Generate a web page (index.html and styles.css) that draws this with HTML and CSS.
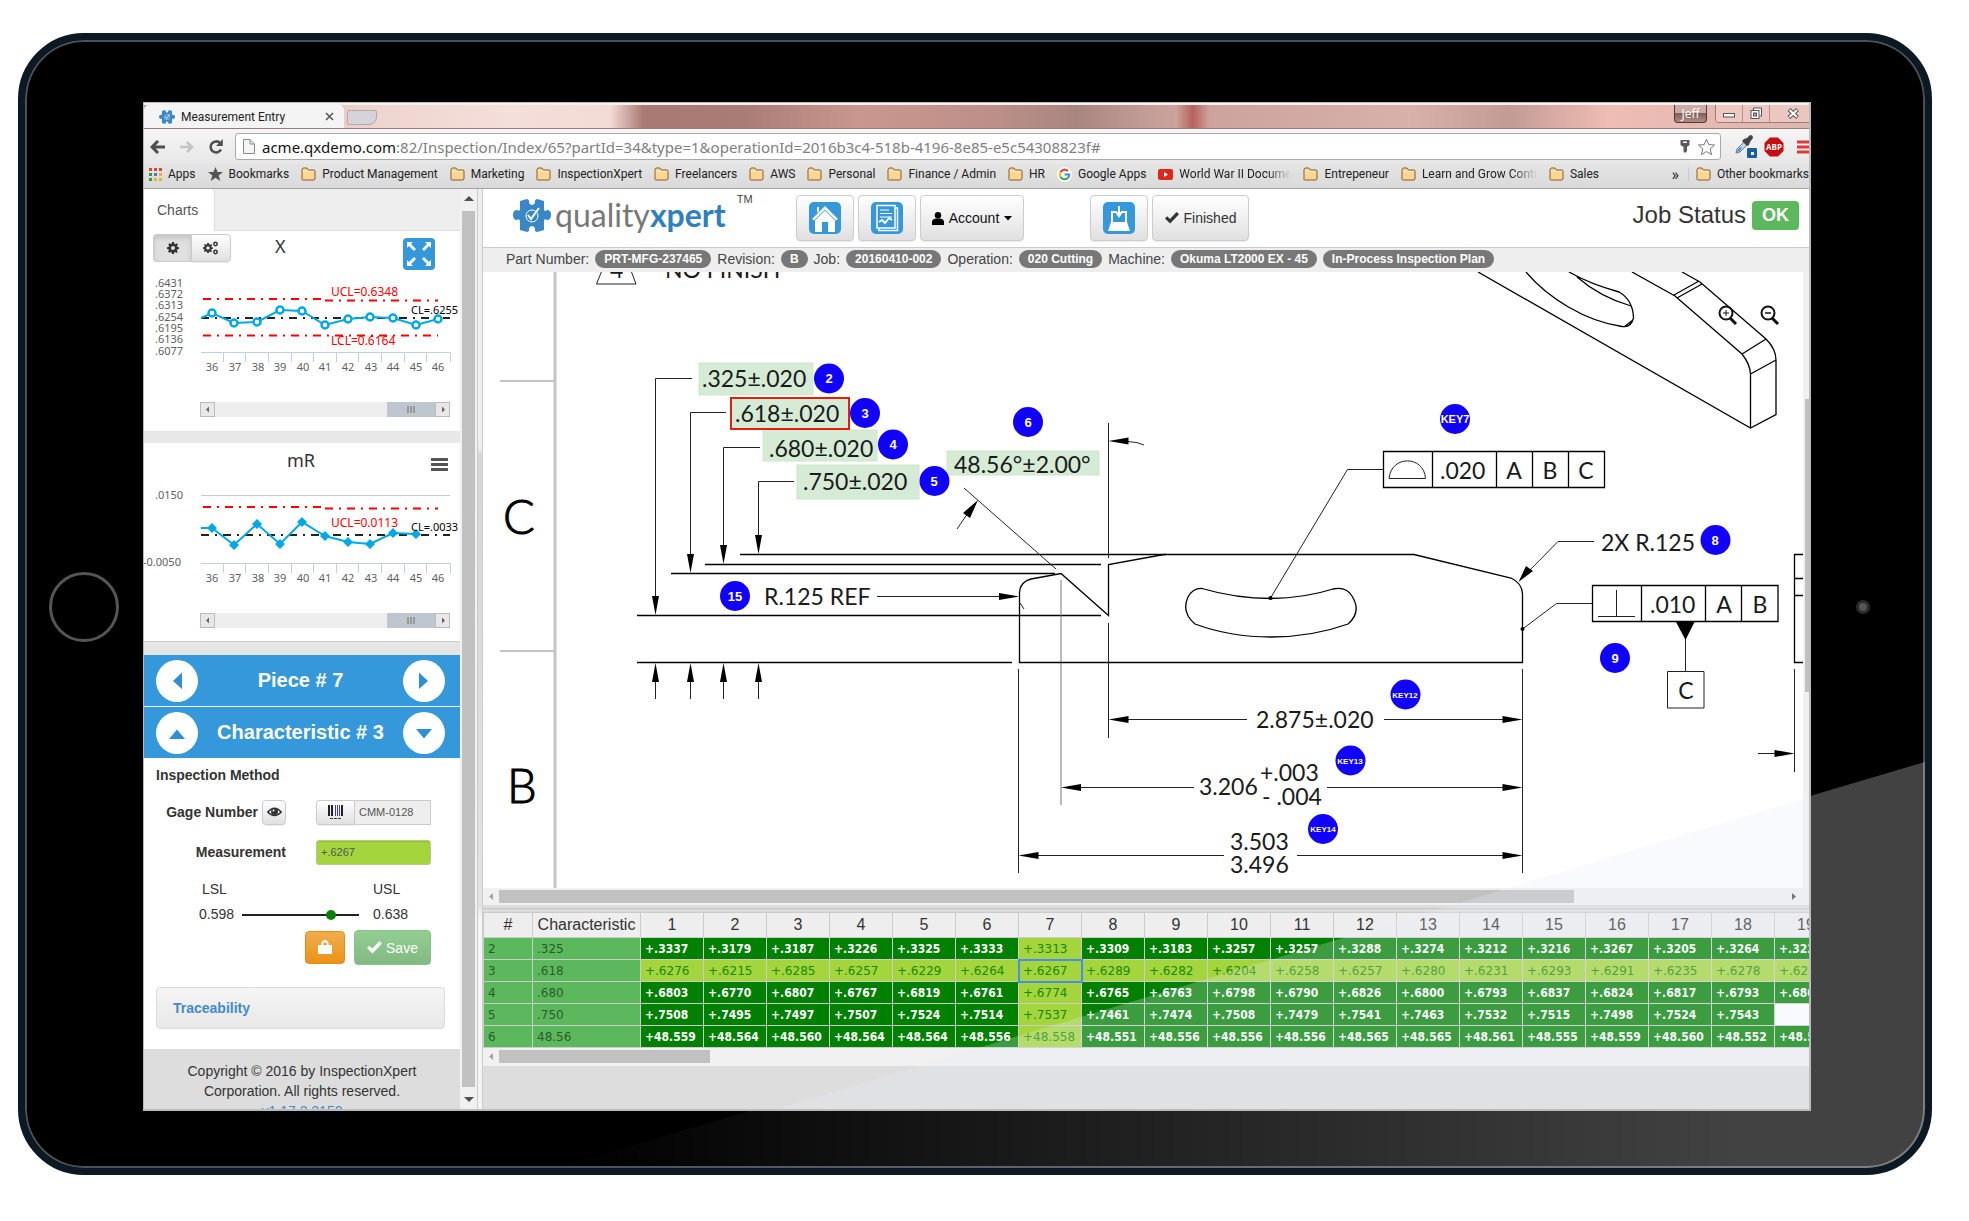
FILE: index.html
```html
<!DOCTYPE html>
<html lang="en">
<head>
<meta charset="utf-8">
<title>Measurement Entry</title>
<link rel="stylesheet" href="styles.css">
</head>
<body>
<svg width="0" height="0" class="defs" aria-hidden="true">
  <defs>
    <symbol id="puzzle" viewBox="0 0 38 33">
      <path fill="#3a87c8" d="M7 2 L14 0 Q17 1 16 4 Q19 8 22 4 Q21 1 24 0 L31 2 L31 11 Q32 13 34 11 Q38 11 38 16 Q38 21 34 21 Q31 19 31 22 L31 31 L24 33 Q21 32 22 29 Q19 25 16 29 Q17 32 14 33 L7 31 L7 22 Q6 19 4 21 Q0 21 0 16 Q0 11 4 11 Q7 13 7 10 Z"/>
      <circle cx="19" cy="17" r="6" fill="none" stroke="#fff" stroke-width="1"/>
      <path d="M15 16 L18 20 L26 9" fill="none" stroke="#fff" stroke-width="2"/>
    </symbol>
    <symbol id="folder" viewBox="0 0 15 14">
      <path d="M1 12.500V2.500L2 1H6L7.500 3H13.500L14 4V12L13 13H1.500Z" fill="#fdd692" stroke="#8d5a2c"/>
      <path d="M2 4.500H13" stroke="#fff0cf"/>
    </symbol>
    <symbol id="cog" viewBox="0 0 12 12">
      <path fill-rule="evenodd" fill="#333" d="M5 0H7L7.400 1.700L8.600 2.200L10 1.300L11 2.500L10 3.800L10.400 5L12 5.300V7L10.400 7.300L9.900 8.500L10.700 10L9.500 11L8.200 10.100L7.300 10.500L7 12H5L4.600 10.400L3.500 10L2.100 10.800L1 9.600L1.900 8.200L1.500 7.200L0 6.900V5.200L1.600 4.900L2.100 3.700L1.200 2.300L2.400 1.200L3.800 2L4.700 1.700ZM6 4A2 2 0 1 0 6 8A2 2 0 1 0 6 4Z"/>
    </symbol>
    <symbol id="check" viewBox="0 0 14 12"><path d="M0 6.500L2.200 4.300L5 7L11.600 0L14 2.300L5.100 11.600Z" fill="currentColor"/></symbol>
  </defs>
</svg>

<div class="tablet">
  <div class="bezel bezel-left"><button class="home" aria-label="Home button"></button></div>

  <div class="screen">
    <div class="tabstrip">
      <div class="tab">
        <svg width="16" height="14"><use href="#puzzle"/></svg>
        <span class="tab-title">Measurement Entry</span>
        <button class="plain" aria-label="Close tab"><svg width="9" height="9"><path d="M1 1L8 8M8 1L1 8" stroke="#555" stroke-width="1.500"/></svg></button>
      </div>
      <button class="plain newtab" aria-label="New tab"></button>
      <div class="winctl">
        <button class="user">Jeff</button>
        <div class="winbtns">
          <button aria-label="Minimize"><svg width="13" height="13"><rect x=".5" y="6.500" width="11" height="3.500" fill="#fff" stroke="#555"/></svg></button>
          <button aria-label="Restore"><svg width="13" height="13"><path d="M3.500 3V1H11.500V9H9.500" fill="#fff" stroke="#555"/><rect x="1" y="3.500" width="8" height="8" fill="#fff" stroke="#555"/><rect x="3.500" y="6" width="3" height="3" fill="#c99" stroke="#555"/></svg></button>
          <button aria-label="Close"><svg width="13" height="11"><path d="M2 1.500L10.500 9.500M10.500 1.500L2 9.500" stroke="#555" stroke-width="4"/><path d="M2.500 2L10 9M10 2L2.500 9" stroke="#fff" stroke-width="2"/></svg></button>
        </div>
      </div>
    </div>

    <div class="toolbar">
      <button class="plain" aria-label="Back"><svg width="16" height="14"><path d="M8 1L2 7L8 13M2 7H15" fill="none" stroke="#4f4f4f" stroke-width="3"/></svg></button>
      <button class="plain" aria-label="Forward"><svg width="16" height="14"><path d="M8 2L13 7L8 12M13 7H1" fill="none" stroke="#c4c4c4" stroke-width="2.500"/></svg></button>
      <button class="plain" aria-label="Reload"><svg width="16" height="16"><path d="M13 10.500A5.500 5.500 0 1 1 12 4" fill="none" stroke="#4f4f4f" stroke-width="2.600"/><path d="M14.800 0V7H8Z" fill="#4f4f4f"/></svg></button>
      <div class="urlbox">
        <svg width="12" height="15"><path d="M.5 .5H7L11.500 5V14.500H.5Z" fill="#f5f5f5" stroke="#888"/><path d="M7 .5V5H11.500" fill="none" stroke="#888"/></svg>
        <span class="url"><b>acme.qxdemo.com</b>:82/Inspection/Index/65?partId=34&amp;type=1&amp;operationId=2016b3c4-518b-4196-8e85-e5c54308823f#</span>
        <svg width="10" height="15"><path d="M.5 1H9.500V6L7.500 7.500H7V12L5 14L3.500 12.500V7.500H2.500L.5 6Z" fill="#5a5a5a"/><rect x="3" y="2.500" width="4" height="1.500" fill="#fff"/></svg>
        <svg width="19" height="18" class="star"><path d="M9.500 1.200L11.800 6.600L17.600 7L13.200 10.800L14.600 16.600L9.500 13.500L4.400 16.600L5.800 10.800L1.400 7L7.200 6.600Z" fill="#fff" stroke="#777"/></svg>
      </div>
      <svg width="24" height="25"><path d="M2 19L3 15L10 8L13 11L6 18Z" fill="#bcd7ec" stroke="#777"/><path d="M3 18L5 14L8 13L6 17Z" fill="#3d8fd1"/><path d="M10 5L13 4L16 1Q19 1 19 4L16 8L15 11L13 12L8 7Z" fill="#444"/><rect x="13" y="14" width="10" height="10" rx="1" fill="#1d5f97"/><rect x="17" y="18" width="3" height="3" fill="#e8f0f7"/></svg>
      <svg width="20" height="20" class="abp"><path d="M6 .5H14L19.500 6V14L14 19.500H6L.5 14V6Z" fill="#c70d0d"/><text x="10" y="13" text-anchor="middle">ABP</text></svg>
      <svg width="12" height="14"><path d="M0 2H12M0 7H12M0 12H12" stroke="#db3a3a" stroke-width="3"/></svg>
    </div>

    <nav class="bookmarks" aria-label="Bookmarks">
      <a href="#"><svg width="13" height="13"><path d="M0 0H3V3H0ZM5 0H8V3H5ZM10 0H13V3H10Z" fill="#e0442f"/><path d="M0 5H3V8H0Z" fill="#2f9a48"/><path d="M5 5H8V8H5Z" fill="#3a7de0"/><path d="M10 5H13V8H10Z" fill="#f0b32b"/><path d="M0 10H3V13H0Z" fill="#2f9a48"/><path d="M5 10H8V13H5ZM10 10H13V13H10Z" fill="#f0b32b"/></svg>Apps</a>
      <a href="#"><svg width="15" height="14"><path d="M7.500 0L9.600 5H15L10.700 8.400L12.300 14L7.500 10.700L2.700 14L4.300 8.400L0 5H5.400Z" fill="#555"/></svg>Bookmarks</a>
      <a href="#"><svg width="15" height="14"><use href="#folder"/></svg>Product Management</a>
      <a href="#"><svg width="15" height="14"><use href="#folder"/></svg>Marketing</a>
      <a href="#"><svg width="15" height="14"><use href="#folder"/></svg>InspectionXpert</a>
      <a href="#"><svg width="15" height="14"><use href="#folder"/></svg>Freelancers</a>
      <a href="#"><svg width="15" height="14"><use href="#folder"/></svg>AWS</a>
      <a href="#"><svg width="15" height="14"><use href="#folder"/></svg>Personal</a>
      <a href="#"><svg width="15" height="14"><use href="#folder"/></svg>Finance / Admin</a>
      <a href="#"><svg width="15" height="14"><use href="#folder"/></svg>HR</a>
      <a href="#"><svg width="15" height="15"><circle cx="7.500" cy="7.500" r="7.500" fill="#fff"/><path d="M3.400 5.200A4.800 4.800 0 0 1 11 4" stroke="#ea4335" fill="none" stroke-width="2"/><path d="M3.400 5.200A5 5 0 0 0 3.400 9.800" stroke="#fbbc05" fill="none" stroke-width="2"/><path d="M3.400 9.800A4.800 4.800 0 0 0 10.800 11" stroke="#34a853" fill="none" stroke-width="2"/><path d="M10.800 11A4.800 4.800 0 0 0 12.300 7.500H7.500" stroke="#4285f4" fill="none" stroke-width="2"/></svg>Google Apps</a>
      <a href="#" class="faded"><svg width="15" height="11"><rect width="15" height="11" rx="2" fill="#e1251b"/><path d="M6 3L10 5.500L6 8Z" fill="#fff"/></svg>World War II Docume</a>
      <a href="#"><svg width="15" height="14"><use href="#folder"/></svg>Entrepeneur</a>
      <a href="#" class="faded"><svg width="15" height="14"><use href="#folder"/></svg>Learn and Grow Conti</a>
      <a href="#"><svg width="15" height="14"><use href="#folder"/></svg>Sales</a>
      <span class="more">»</span>
      <a href="#" class="other"><svg width="15" height="14"><use href="#folder"/></svg>Other bookmarks</a>
    </nav>

    <div class="app">
      <aside class="sidebar">
        <div class="side-content">
          <div class="tabs"><a href="#" class="active">Charts</a></div>

          <section class="card">
            <div class="card-head">
              <div class="btn-group">
                <button class="btn pressed" aria-label="Settings"><svg width="12" height="12"><use href="#cog"/></svg></button>
                <button class="btn" aria-label="All settings"><svg width="16" height="14"><svg x="0" y="2" width="10" height="10"><use href="#cog"/></svg><circle cx="12.500" cy="3" r="1.700" fill="none" stroke="#333" stroke-width="1.500"/><circle cx="12.500" cy="11" r="1.700" fill="none" stroke="#333" stroke-width="1.500"/></svg></button>
              </div>
              <h2>X</h2>
              <button class="plain expand" aria-label="Expand"><svg width="32" height="32"><rect width="32" height="32" rx="4" fill="#3498db"/><path d="M3 4H10L8 6L13 11L11 13L6 8L4 10V4ZM29 4H22L24 6L19 11L21 13L26 8L28 10V4ZM3 28H10L8 26L13 21L11 19L6 24L4 22V28ZM29 28H22L24 26L19 21L21 19L26 24L28 22V28Z" fill="#fff"/></svg></button>
            </div>
            <svg class="chart" width="316" height="161" viewBox="144 270 316 161" role="img" aria-label="X chart">
              <g class="axis-text">
                <text x="155" y="287">.6431</text><text x="155" y="298">.6372</text><text x="155" y="309">.6313</text><text x="155" y="321">.6254</text><text x="155" y="332">.6195</text><text x="155" y="343">.6136</text><text x="155" y="355">.6077</text>
                <g class="mid"><text x="212" y="371">36</text><text x="235" y="371">37</text><text x="258" y="371">38</text><text x="280" y="371">39</text><text x="303" y="371">40</text><text x="325" y="371">41</text><text x="348" y="371">42</text><text x="371" y="371">43</text><text x="393" y="371">44</text><text x="416" y="371">45</text><text x="438" y="371">46</text></g>
              </g>
              <path class="axis" d="M201 352.500H450.500V362M223.500 352V362M245.500 352V362M268.500 352V362M291.500 352V362M313.500 352V362M336.500 352V362M358.500 352V362M381.500 352V362M404.500 352V362M426.500 352V362"/>
              <path class="limit" d="M203 299H321M325 300.500H438M203 335.500H438"/>
              <path class="centre" d="M201 318H450"/>
              <path class="series" d="M201 318L212 313L234 323L257 322L280 310L302 311L325 325L348 319L370 317L393 318L416 325L438 319"/>
              <g class="rings"><circle cx="212" cy="313" r="3.500"/><circle cx="234" cy="323" r="3.500"/><circle cx="257" cy="322" r="3.500"/><circle cx="280" cy="310" r="3.500"/><circle cx="302" cy="311" r="3.500"/><circle cx="325" cy="325" r="3.500"/><circle cx="348" cy="319" r="3.500"/><circle cx="370" cy="317" r="3.500"/><circle cx="393" cy="318" r="3.500"/><circle cx="416" cy="325" r="3.500"/><circle cx="438" cy="319" r="3.500"/></g>
              <text class="lim-text" x="331" y="296">UCL=0.6348</text><text class="lim-text" x="331" y="345">LCL=0.6164</text><text class="cl-text" x="411" y="314">CL=.6255</text>
              <g class="hbar"><rect x="200" y="402" width="250" height="15" fill="#eee"/><rect x="387" y="402" width="48" height="15" fill="#bec6d0"/><rect class="cap" x="200.500" y="402.500" width="14" height="14"/><rect class="cap" x="435.500" y="402.500" width="14" height="14"/><path d="M209 406.500V412.500L206 409.500ZM442 406.500V412.500L445 409.500Z" fill="#666"/><path d="M408 406V413M411 406V413M414 406V413" stroke="#999" stroke-width="2"/></g>
            </svg>
          </section>

          <section class="card card-mr">
            <div class="card-head">
              <h2>mR</h2>
              <button class="plain burger" aria-label="Chart menu"><svg width="17" height="13"><path d="M1 1.500H16M1 6.500H16M1 11.500H16" stroke="#555" stroke-width="3" stroke-linecap="round"/></svg></button>
            </div>
            <svg class="chart" width="316" height="159" viewBox="144 483 316 159" role="img" aria-label="Moving range chart">
              <g class="axis-text">
                <text x="155" y="499">.0150</text><text x="143" y="566">-0.0050</text>
                <g class="mid"><text x="212" y="582">36</text><text x="235" y="582">37</text><text x="258" y="582">38</text><text x="280" y="582">39</text><text x="303" y="582">40</text><text x="325" y="582">41</text><text x="348" y="582">42</text><text x="371" y="582">43</text><text x="393" y="582">44</text><text x="416" y="582">45</text><text x="438" y="582">46</text></g>
              </g>
              <path d="M201 495.500H450" stroke="#ccc"/>
              <path class="axis" d="M201 563.500H450.500V573M223.500 563V573M245.500 563V573M268.500 563V573M291.500 563V573M313.500 563V573M336.500 563V573M358.500 563V573M381.500 563V573M404.500 563V573M426.500 563V573"/>
              <path class="limit" d="M203 507H321M325 508.500H438"/>
              <path class="centre" d="M201 535H450"/>
              <path class="series" d="M201 528L212 528L234 545L257 524L280 544L302 522L325 536L348 542L370 544L393 533L416 534"/>
              <path fill="#00a9e6" d="M212 523l5 5l-5 5l-5-5ZM234 540l5 5l-5 5l-5-5ZM257 519l5 5l-5 5l-5-5ZM280 539l5 5l-5 5l-5-5ZM302 517l5 5l-5 5l-5-5ZM325 531l5 5l-5 5l-5-5ZM348 537l5 5l-5 5l-5-5ZM370 539l5 5l-5 5l-5-5ZM393 528l5 5l-5 5l-5-5ZM416 529l5 5l-5 5l-5-5Z"/>
              <text class="lim-text" x="331" y="527">UCL=0.0113</text><text class="cl-text" x="411" y="531">CL=.0033</text>
              <g class="hbar"><rect x="200" y="613" width="250" height="15" fill="#eee"/><rect x="387" y="613" width="48" height="15" fill="#bec6d0"/><rect class="cap" x="200.500" y="613.500" width="14" height="14"/><rect class="cap" x="435.500" y="613.500" width="14" height="14"/><path d="M209 617.500V623.500L206 620.500ZM442 617.500V623.500L445 620.500Z" fill="#666"/><path d="M408 617V624M411 617V624M414 617V624" stroke="#999" stroke-width="2"/></g>
            </svg>
          </section>

          <div class="stepper">
            <button class="round" aria-label="Previous piece"><svg width="42" height="42"><path d="M26 12.500V29L17 21Z" fill="#2f8fd6"/></svg></button>
            <strong>Piece # 7</strong>
            <button class="round" aria-label="Next piece"><svg width="42" height="42"><path d="M16 12.500V29L25 21Z" fill="#2f8fd6"/></svg></button>
          </div>
          <div class="stepper">
            <button class="round" aria-label="Previous characteristic"><svg width="42" height="42"><path d="M13 27H29L21 17.500Z" fill="#2f8fd6"/></svg></button>
            <strong>Characteristic # 3</strong>
            <button class="round" aria-label="Next characteristic"><svg width="42" height="42"><path d="M13 17H29L21 26.500Z" fill="#2f8fd6"/></svg></button>
          </div>

          <form class="entry">
            <div class="row first"><span class="lab">Inspection Method</span></div>
            <div class="row">
              <label class="lab" for="gage">Gage Number</label>
              <button type="button" class="btn eye" aria-label="Show gage"><svg width="15" height="12"><path d="M.8 6Q7.500 -1.500 14.200 6Q7.500 13 .8 6Z" fill="#fff" stroke="#333" stroke-width="1.500"/><circle cx="7.500" cy="5.500" r="3.500" fill="#333"/><circle cx="6.500" cy="4.500" r="1" fill="#fff"/></svg></button>
              <div class="field group"><button type="button" class="btn scan" aria-label="Scan barcode"><svg width="15" height="15"><path d="M1 0V11M4 0V11M14 0V11" stroke="#222" stroke-width="2"/><path d="M7.500 0V11M9.500 0V11M11.500 0V11" stroke="#447"/><path d="M2 13.500H13" stroke="#333" stroke-dasharray="3 1"/></svg></button><input id="gage" type="text" value="CMM-0128" readonly></div>
            </div>
            <div class="row">
              <label class="lab" for="meas">Measurement</label>
              <input id="meas" class="field meas" type="text" value="+.6267">
            </div>
            <div class="limits">
              <span>LSL</span><span></span><span>USL</span>
              <span>0.598</span>
              <svg width="117" height="12"><path d="M0 6H117" stroke="#222" stroke-width="2"/><circle cx="89" cy="6" r="5" fill="#0a800a"/></svg>
              <span>0.638</span>
            </div>
            <div class="actions">
              <button type="button" class="lock" aria-label="Lock"><svg width="14" height="15"><path fill-rule="evenodd" d="M3 5L4 1.500L6 0H8L10 1.500L11 5H14V14H0V5ZM5 5H9L8.500 2.500H5.500Z" fill="#fff"/></svg></button>
              <button type="button" class="save"><svg width="15" height="13" viewBox="0 0 14 12"><use href="#check"/></svg>Save</button>
            </div>
            <button type="button" class="trace">Traceability</button>
          </form>
          <footer>Copyright © 2016 by InspectionXpert Corporation. All rights reserved.<br><a href="#">v1.17.2.2150</a></footer>
        </div>
        <div class="vscroll"><svg width="10" height="7"><path d="M0 6H10L5 1Z" fill="#505050"/></svg><div class="thumb"></div><svg width="10" height="7"><path d="M0 1H10L5 6Z" fill="#505050"/></svg></div>
        <div class="splitter"></div>
      </aside>

      <main>
        <header>
          <div class="logo">
            <svg width="38" height="33"><use href="#puzzle"/></svg>
            <span class="word">quality<b>xpert</b></span><sup>TM</sup>
          </div>
          <button class="btn big sq" aria-label="Home"><svg width="32" height="32"><rect width="32" height="32" rx="5" fill="#3498db"/><path d="M3 17L16 4L29 17L27 18.500L16 7.500L5 18.500ZM6 18.500L16 8.500L26 18.500V30H19V20H13V30H6ZM8 5H10V9L8 11Z" fill="#fff"/></svg></button>
          <button class="btn big sq" aria-label="Reports"><svg width="32" height="32"><rect width="32" height="32" rx="5" fill="#3498db"/><path d="M6 3.500H24V26H6ZM24 6H26.500V28.500H8V26" fill="none" stroke="#fff" stroke-width="1.500"/><path d="M9 8H18M9 11.500H21M9 15H21" stroke="#fff" stroke-width="1.200"/><path d="M8 20L11 18L14 21L18 16L21 18" fill="none" stroke="#fff" stroke-width="2"/></svg></button>
          <button class="btn big account"><svg width="12" height="13"><circle cx="6" cy="3.200" r="3.200" fill="#000"/><path d="M0 13V9Q1 6.500 4 6.500H8Q11 6.500 12 9V13Z" fill="#000"/></svg>Account<svg width="8" height="5"><path d="M0 0H8L4 4.500Z" fill="#000"/></svg></button>
          <button class="btn big sq machine" aria-label="Machine"><svg width="32" height="32"><rect width="32" height="32" rx="5" fill="#3498db"/><path d="M8 9H14V11H10V20H22V11H18V9H24V20L27 29H5L8 20ZM15 4H17V10H20L16 16L12 10H15Z" fill="#fff"/></svg></button>
          <button class="btn big finished"><svg width="14" height="12"><use href="#check"/></svg>Finished</button>
          <div class="status">Job Status <span>OK</span></div>
        </header>

        <div class="info">Part Number: <b>PRT-MFG-237465</b> Revision: <b>B</b> Job: <b>20160410-002</b> Operation: <b>020 Cutting</b> Machine: <b>Okuma LT2000 EX - 45</b> <b>In-Process Inspection Plan</b></div>

        <div class="viewer">
          <svg class="drawing" width="1320" height="616" viewBox="483 272 1320 616" role="img" aria-label="Part drawing">
            <g stroke="#c4c4c4" stroke-width="2" fill="none"><path d="M555 272V888"  stroke-width="3"/><path d="M500 381H555M500 651H555"/></g>
            <g class="zone"><text x="503" y="534">C</text><text x="507" y="803">B</text></g>
            <g class="boxes"><rect x="699" y="363" width="114" height="32"/><rect x="763" y="430" width="114" height="31"/><rect x="797" y="465" width="122" height="34"/><rect x="947" y="451" width="152" height="24"/><rect x="731" y="398" width="118" height="31" class="sel"/></g>
            <g class="ln">
              <path d="M603 268L596.500 284H636L630 268"/>
              <path d="M692 378.500H655.500V600M726 412.500H690.500V560M760 447.500H723.500V550M794 481.500H758.500V540"/>
              <path class="hv" d="M740 554.500H1166M705 564.500H1101M671 573.500H1055M637 615.500H1101M637 662.500H1012"/>
              <path d="M655.500 680V699M690.500 680V699M723.500 680V699M758.500 680V699"/>
              <path d="M1108.500 423V558M1108.500 623V738M1018.500 669V873M1522.500 669V873M1794.500 669V772"/>
              <path d="M1061 580V805" stroke="#777"/>
              <path class="hv" d="M1019.500 662.500V592Q1020 582 1031 579L1061 573.500L1108.500 615.500V564.500L1164 554.500H1414L1511 578Q1522 583 1522.500 594V662.500Z"/>
              <path d="M1020 603L1024 609M964 488L1056 569M957 529L970 510M1128 441.500Q1138 442 1144 445M877 596.500H1000"/>
              <path class="hv" d="M1202 588.500Q1236 598.500 1271 598.500Q1305 598 1333 589Q1346 586 1352 596Q1362 612 1348 624Q1312 637 1271 637Q1230 637 1195 624Q1181 612 1188 597Q1193 588 1202 588.500Z"/>
              <path d="M1383 469.500H1347.500L1270.500 598"/>
              <path class="hv" d="M1383.500 451.500H1604.500V487.500H1383.500ZM1432.500 451V488M1496.500 451V488M1532.500 451V488M1568.500 451V488"/>
              <path d="M1389 478.500H1425.500C1424 455 1391 455 1389 478.500Z"/>
              <path d="M1594 541.500H1558L1528 572M1592 603.500H1556.500L1522.500 629"/>
              <path class="hv" d="M1592.500 585.500H1778V621.500H1592.500ZM1641.500 585V621M1705.500 585V621M1741.500 585V621"/>
              <path d="M1616.500 590V616.500M1598 616.500H1635M1685.500 638V671.500M1667.500 671.500H1704V708H1667.500Z"/>
              <path class="hv" d="M1804 554.500H1794.500V662.500H1804M1794 578.500H1804M1794 595.500H1804"/>
              <path d="M1758 753.500H1776M1128 719.500H1247M1384 719.500H1504M1080 787.500H1194M1327 787.500H1504M1038 855.500H1224M1297 855.500H1504"/>
              <path class="hv" d="M1478 272L1750.500 428L1776 414.500V360Q1776 349 1766 339L1700 282L1682 272M1750.500 428V374Q1750 364 1742 354L1675 296L1632 272M1750.500 374L1776 360M1742 354L1766 339M1674 295L1699 281M1677 298L1702 284M1526 272C1548 298 1585 321 1622 326.500Q1631 328 1633.500 318Q1633 300 1619 292Q1590 284 1569 272M1577 277Q1600 297 1631 306M1624 327L1633 320"/>
            </g>
            <g class="arrows">
              <path d="M655.500 615l-3.500-19h7ZM690.500 573l-3.500-19h7ZM723.500 564l-3.500-19h7ZM758.500 554l-3.500-19h7Z"/>
              <path d="M655.500 663l-3.500 19h7ZM690.500 663l-3.500 19h7ZM723.500 663l-3.500 19h7ZM758.500 663l-3.500 19h7Z"/>
              <path d="M1019 596.500l-20-3.500v7ZM1108.500 441l20-3.500v7ZM978 500L963 513L970 518ZM1518.500 582L1526 566L1533 571Z"/>
              <path d="M1108.500 719.500l20-3.500v7ZM1061 787.500l20-3.500v7ZM1018.500 855.500l20-3.500v7ZM1522.500 719.500l-20-3.500v7ZM1522.500 787.500l-20-3.500v7ZM1522.500 855.500l-20-3.500v7ZM1794.500 753.500l-20-3.500v7Z"/>
              <path d="M1675.500 621H1695L1685.500 640Z"/><circle cx="1270.500" cy="598" r="2"/><circle cx="1522.500" cy="629" r="2"/>
            </g>
            <g class="dim">
              <text x="610" y="278">4</text><text x="665" y="278">NO FINISH</text>
              <text x="702" y="387">.325±.020</text><text x="735" y="422">.618±.020</text><text x="769" y="457">.680±.020</text><text x="803" y="490">.750±.020</text><text x="954" y="473">48.56°±2.00°</text>
              <text x="764" y="605">R.125 REF</text><text x="1601" y="551">2X R.125</text>
              <text x="1440" y="479">.020</text><text x="1650" y="613">.010</text>
              <g class="mid"><text x="1514" y="479">A</text><text x="1550" y="479">B</text><text x="1586" y="479">C</text><text x="1724" y="613">A</text><text x="1760" y="613">B</text><text x="1686" y="699">C</text></g>
              <text x="1256" y="728">2.875±.020</text><text x="1199" y="795">3.206</text><text x="1260" y="781">+.003</text><text x="1262" y="805">- .004</text><text x="1230" y="850">3.503</text><text x="1230" y="873">3.496</text>
            </g>
            <g class="balloons">
              <circle cx="829" cy="378.500" r="15"/><circle cx="865" cy="413" r="15"/><circle cx="893" cy="444.500" r="15"/><circle cx="934.500" cy="481" r="15"/><circle cx="1028" cy="422" r="15"/><circle cx="735" cy="596" r="15"/><circle cx="1455" cy="419" r="15"/><circle cx="1715.500" cy="540" r="15"/><circle cx="1615" cy="658" r="15"/><circle cx="1405.500" cy="694.500" r="15"/><circle cx="1350.500" cy="760.500" r="15"/><circle cx="1323" cy="829" r="15"/>
              <text x="829" y="383">2</text><text x="865" y="418">3</text><text x="893" y="449">4</text><text x="934" y="486">5</text><text x="1028" y="427">6</text><text x="735" y="601">15</text><text x="1715" y="545">8</text><text x="1615" y="663">9</text>
              <text class="k1" x="1455" y="423">KEY7</text><text class="k2" x="1405" y="698">KEY12</text><text class="k2" x="1350" y="764">KEY13</text><text class="k2" x="1323" y="832">KEY14</text>
            </g>
            <g fill="none" stroke="#111" stroke-width="2"><circle cx="1726" cy="313" r="6.500"/><path d="M1730 318L1736 324" stroke-width="3"/><path d="M1723 313H1729M1726 310V316" stroke-width="1"/><circle cx="1768" cy="313" r="6.500"/><path d="M1772 318L1778 324" stroke-width="3"/><path d="M1765 313H1771" stroke-width="1.500"/></g>
          </svg>
          <div class="vthin"><div></div></div>
        </div>
        <div class="hscroll wide"><svg width="16" height="17"><path d="M10 5V12L6 8.500Z" fill="#a3a3a3"/></svg><div class="track"><div class="thumb"></div></div><svg width="16" height="17"><path d="M6 5V12L10 8.500Z" fill="#505050"/></svg></div>
        <div class="hsplit"></div>

        <div class="grid">
          <table>
            <colgroup><col class="c-num"><col class="c-char"><col span="19" class="c-val"></colgroup>
            <thead><tr><th>#</th><th>Characteristic</th><th>1</th><th>2</th><th>3</th><th>4</th><th>5</th><th>6</th><th>7</th><th>8</th><th>9</th><th>10</th><th>11</th><th>12</th><th>13</th><th>14</th><th>15</th><th>16</th><th>17</th><th>18</th><th>19</th></tr></thead>
            <tbody>
              <tr><td>2</td><td>.325</td><td>+.3337</td><td>+.3179</td><td>+.3187</td><td>+.3226</td><td>+.3325</td><td>+.3333</td><td>+.3313</td><td>+.3309</td><td>+.3183</td><td>+.3257</td><td>+.3257</td><td>+.3288</td><td>+.3274</td><td>+.3212</td><td>+.3216</td><td>+.3267</td><td>+.3205</td><td>+.3264</td><td>+.3224</td></tr>
              <tr class="current"><td>3</td><td>.618</td><td>+.6276</td><td>+.6215</td><td>+.6285</td><td>+.6257</td><td>+.6229</td><td>+.6264</td><td class="cell-on">+.6267</td><td>+.6289</td><td>+.6282</td><td>+.6204</td><td>+.6258</td><td>+.6257</td><td>+.6280</td><td>+.6231</td><td>+.6293</td><td>+.6291</td><td>+.6235</td><td>+.6278</td><td>+.6240</td></tr>
              <tr><td>4</td><td>.680</td><td>+.6803</td><td>+.6770</td><td>+.6807</td><td>+.6767</td><td>+.6819</td><td>+.6761</td><td>+.6774</td><td>+.6765</td><td>+.6763</td><td>+.6798</td><td>+.6790</td><td>+.6826</td><td>+.6800</td><td>+.6793</td><td>+.6837</td><td>+.6824</td><td>+.6817</td><td>+.6793</td><td>+.6805</td></tr>
              <tr><td>5</td><td>.750</td><td>+.7508</td><td>+.7495</td><td>+.7497</td><td>+.7507</td><td>+.7524</td><td>+.7514</td><td>+.7537</td><td>+.7461</td><td>+.7474</td><td>+.7508</td><td>+.7479</td><td>+.7541</td><td>+.7463</td><td>+.7532</td><td>+.7515</td><td>+.7498</td><td>+.7524</td><td>+.7543</td><td class="blank"></td></tr>
              <tr><td>6</td><td>48.56</td><td>+48.559</td><td>+48.564</td><td>+48.560</td><td>+48.564</td><td>+48.564</td><td>+48.556</td><td>+48.558</td><td>+48.551</td><td>+48.556</td><td>+48.556</td><td>+48.556</td><td>+48.565</td><td>+48.565</td><td>+48.561</td><td>+48.555</td><td>+48.559</td><td>+48.560</td><td>+48.552</td><td>+48.560</td></tr>
            </tbody>
          </table>
        </div>
        <div class="hscroll narrow"><svg width="16" height="17"><path d="M10 5V12L6 8.500Z" fill="#a3a3a3"/></svg><div class="track"><div class="thumb"></div></div></div>
      </main>
    </div>
  </div>

  <div class="bezel bezel-right"><span class="camera"></span></div>
</div>
</body>
</html>
```
FILE: styles.css
```css
* { box-sizing: border-box; }
body { margin: 0; padding: 33px 37px 46px 18px; background: #fff; font-family: "Liberation Sans", Arial, sans-serif; font-size: 14px; color: #333; }
svg { display: block; flex: none; }
.defs { position: absolute; }
button, input { font: inherit; color: inherit; margin: 0; }
a { color: inherit; text-decoration: none; }
.plain { border: 0; padding: 0; background: none; }

/* device frame */
.tablet { position: relative; display: grid; grid-template-columns: 118px minmax(0, 1fr) 114px; padding: 62px 0 57px; background: #000; border: 7px solid #0d1922; border-radius: 66px; box-shadow: inset 0 0 0 2px #4b5257; overflow: hidden; }
.tablet::before { content: ""; position: absolute; inset: 0; clip-path: polygon(100% 64%, 100% 100%, 28% 100%); background: linear-gradient(to right, rgba(255,255,255,0) 28%, rgba(255,255,255,.26) 90%); }
.bezel { display: flex; align-items: center; position: relative; }
.bezel-left { justify-content: center; }
.home { width: 70px; height: 70px; border: 3px solid #555; border-radius: 50%; background: #000; }
.bezel-right { justify-content: center; padding-right: 10px; }
.camera { width: 14px; height: 14px; border-radius: 50%; background: #555; border: 3px solid #2b2b2b; }

.screen { position: relative; border: 2px solid #bbb; border-width: 1px 2px 2px 1px; background: #ddd; overflow: hidden; }
.screen::after { content: ""; position: absolute; inset: 0; clip-path: polygon(100% 69%, 100% 100%, 38% 100%); background: rgba(230,234,248,.26); pointer-events: none; }

/* browser */
.tabstrip { display: flex; align-items: flex-end; height: 26px; border-top: 2px solid #f4f0f0; background: linear-gradient(to right, #cf9d98 0, #efd5cf 14%, #f5dfda 22%, #f3dad5 28%, #a97973 30%, #a97c75 36%, #c99790 43%, #bd8f88 51%, #a98580 56%, #c7a09a 61%, #cba19b 62%, #b5625d 63%, #cfa39d 64%, #d9b0aa 76%, #c49a95 82%, #efbdb3 88%, #dcb5af 100%); border-bottom: 1px solid #8f7f7f; }
.tab { display: flex; align-items: center; gap: 6px; width: 200px; height: 23px; padding: 0 10px 0 15px; background: #f4f4f4; border-radius: 5px 5px 0 0; font: 12px Roboto, "Noto Sans", sans-serif; color: #222; }
.tab-title { flex: 1; white-space: nowrap; }
.newtab { width: 30px; height: 15px; margin: 0 0 3px 3px; background: #d6d4da; border: 1px solid #b4a8ac; border-radius: 2px 2px 8px 2px; }
.winctl { display: flex; gap: 8px; margin-left: auto; align-self: flex-start; }
.user { width: 33px; height: 18px; padding: 0; border: 1px solid #4f3b39; border-top: 0; border-radius: 0 0 4px 4px; background: linear-gradient(#cfa9a4 45%, #7e5a56 46%, #b08f8b); color: #fff; font: 12px/16px "Open Sans", sans-serif; }
.winbtns { display: flex; border: 1px solid #a07c78; border-top: 0; border-right: 0; border-radius: 0 0 0 4px; }
.winbtns button { display: flex; align-items: center; justify-content: center; width: 27px; height: 17px; padding: 0; border: 0; border-right: 1px solid #b38f8b; background: rgba(255,225,220,.4); }
.winbtns button:last-child { width: 39px; padding-left: 8px; border: 0; }
.toolbar { display: flex; align-items: center; gap: 13px; height: 35px; padding: 0 0 0 6px; background: linear-gradient(#f7f5f6, #e7e7e7); overflow: hidden; }
.urlbox { display: flex; align-items: center; gap: 7px; flex: 1; min-width: 0; height: 27px; margin-left: -2px; padding: 0 4px 0 7px; background: #fff; border: 1px solid #a9a9a9; border-radius: 3px; }
.url { flex: 1; font: 15px/22px "Noto Sans", "Open Sans", sans-serif; color: #808080; white-space: nowrap; overflow: hidden; }
.url b { font-weight: 400; color: #111; }
.abp text { font: bold 8px "Open Sans", sans-serif; fill: #fff; }
.abp { margin-left: -7px; }
.bookmarks { display: flex; align-items: center; gap: 12px; height: 25px; padding: 0 0 4px 5px; background: linear-gradient(#e4e4e4, #dadada); border-bottom: 1px solid #a4a4a4; font: 12px Roboto, "Noto Sans", sans-serif; color: #222; white-space: nowrap; overflow: hidden; }
.bookmarks a { display: flex; align-items: center; gap: 6px; }
.faded { -webkit-mask-image: linear-gradient(to right, #000 82%, transparent); mask-image: linear-gradient(to right, #000 82%, transparent); }
.more { margin-left: auto; font-size: 16px; }
.bookmarks .other { flex: none; padding-left: 7px; margin-left: -3px; border-left: 1px solid #c5ccd6; }

.app { display: flex; align-items: stretch; }
/* sidebar */
.sidebar { display: flex; flex: none; width: 339px; height: 920px; overflow: hidden; }
.side-content { width: 316px; flex: none; background: #fff; }
.tabs { display: flex; height: 42px; background: #eee; border-bottom: 1px solid #ddd; }
.tabs a { width: 71px; height: 42px; padding-left: 13px; line-height: 42px; background: #fff; border-right: 1px solid #ddd; border-radius: 0 4px 0 0; color: #555; }
.card { border-bottom: 12px solid #e8e8e8; }
.card-head { display: flex; align-items: flex-start; height: 39px; padding: 3px 25px 0 9px; }
.card h2 { margin: 0; font: 18px/24px "Noto Sans", sans-serif; color: #333; }
.card .btn-group + h2 { margin-left: 44px; }
.expand { margin: 4px 0 0 auto; }
.card-mr { border-bottom: 13px solid #e5e5e5; box-shadow: inset 0 -1px #ccc; }
.card-mr .card-head { height: 40px; padding: 5px 12px 0 143px; }
.burger { margin: 10px 0 0 auto; }
.btn { display: inline-flex; align-items: center; justify-content: center; padding: 0; border: 1px solid #ccc; background: linear-gradient(#fff, #e0e0e0); box-shadow: 0 1px 1px rgba(0,0,0,.08); border-radius: 4px; color: #333; }
.btn-group { display: flex; }
.btn-group .btn { width: 40px; height: 28px; }
.btn-group .btn:first-child { width: 38px; border-radius: 4px 0 0 4px; border-right: 0; }
.btn-group .btn:last-child { border-radius: 0 4px 4px 0; }
.pressed { background: #e0e0e0; box-shadow: inset 0 3px 5px rgba(0,0,0,.13); }
.axis-text { font: 11px "Noto Sans", sans-serif; fill: #606060; }
.mid { text-anchor: middle; }
.axis { fill: none; stroke: #c0d0e0; }
.limit { fill: none; stroke: red; stroke-width: 2; stroke-dasharray: 8 6 2 6; }
.centre { fill: none; stroke: #222; stroke-width: 2; stroke-dasharray: 8 6 2 6; }
.series { fill: none; stroke: #00a9e6; stroke-width: 2; }
.rings { fill: #fff; stroke: #00a9e6; stroke-width: 2.500; }
.lim-text { font: 12px "Noto Sans", sans-serif; fill: red; }
.cl-text { font: 11px "Noto Sans", sans-serif; fill: #000; }
.cap { fill: #ebe7e8; stroke: #bbb; }
.stepper { display: flex; align-items: center; justify-content: space-between; height: 51px; padding: 0 15px 0 12px; background: #3498db; color: #fff; font-size: 20px; }
.stepper + .stepper { margin-top: 1px; }
.round { width: 42px; height: 42px; padding: 0; border: 0; border-radius: 50%; background: #fff; }
.entry { padding: 0 15px 20px 12px; }
.row { display: flex; align-items: center; height: 40px; padding-right: 14px; }
.row.first { height: 34px; }
.lab { font-weight: bold; }
.row:not(.first) .lab { width: 130px; text-align: right; }
.row:not(.first) .lab:has(+ .eye) { width: 102px; }
.eye { width: 24px; height: 25px; margin-left: 4px; }
.field { width: 115px; height: 25px; margin-left: auto; }
.group { display: flex; }
.scan { width: 39px; border-radius: 3px 0 0 3px; }
.group input { flex: 1; min-width: 0; padding: 0 4px; border: 1px solid #ccc; border-left: 0; background: #eee; color: #555; font-size: 11px; }
.meas { padding: 0 4px; border: 1px solid #b9c98e; border-radius: 3px; background: #a4d53c; color: #555; font-size: 11px; box-shadow: inset 0 1px 1px rgba(0,0,0,.1); }
.limits { display: grid; grid-template-columns: 36px 117px 40px; column-gap: 7px; align-items: center; padding: 5px 0 0 43px; line-height: 25px; }
.limits span:nth-child(3n) { padding-left: 7px; }
.limits span:nth-child(1) { padding-left: 3px; }
.actions { display: flex; justify-content: flex-end; align-items: center; gap: 9px; margin: 3px 14px 22px 0; }
.lock { display: flex; align-items: center; justify-content: center; width: 40px; height: 33px; padding: 0; border: 1px solid #e38d13; border-radius: 4px; background: linear-gradient(#f0ad4e, #eb9316); }
.save { display: flex; align-items: center; justify-content: center; gap: 4px; width: 77px; height: 35px; padding: 0; border: 1px solid #85c485; border-radius: 4px; background: linear-gradient(#92cf92, #83b983); color: #fff; }
.trace { display: block; width: 100%; height: 42px; padding: 0 16px; text-align: left; font-weight: bold; color: #428bca; border: 1px solid #ddd; border-radius: 4px; background: linear-gradient(#f5f5f5, #e8e8e8); }
footer { height: 70px; padding: 12px 30px 0; background: #ddd; text-align: center; line-height: 20px; }
footer a { color: #428bca; }
.vscroll { display: flex; flex-direction: column; align-items: center; width: 17px; padding: 6px 0; background: #f1f1f1; gap: 9px; }
.vscroll .thumb { width: 13px; flex: 1; background: #c1c1c1; }
.splitter { flex: 1; background: linear-gradient(#eee 28%, #d6d6d6 29%, #e2e2e2 78%, #f4f4f4 79%); border: 1px solid #ccc; border-width: 0 1px; }

/* main area */
main { flex: 1; min-width: 0; overflow: hidden; }
header { display: flex; align-items: center; height: 59px; padding: 0 10px 0 30px; background: #fff; border-bottom: 1px solid #ccc; }
.logo { display: flex; align-items: center; width: 283px; padding-bottom: 6px; white-space: nowrap; }
.word { font: 32px/40px Lato, sans-serif; color: #777; margin-left: 4px; }
.word b { color: #2f7fc1; }
.logo sup { font-size: 11px; line-height: 12px; align-self: flex-start; margin: -2px 0 0 11px; color: #444; }
.big { height: 46px; border-radius: 4px; gap: 5px; color: #333; }
.sq { width: 58px; margin-right: 4px; }
.account { width: 104px; color: #111; }
.machine { margin-left: 66px; }
.finished { width: 97px; }
.status { display: flex; align-items: center; gap: 6px; margin-left: auto; padding-bottom: 6px; font-size: 24px; white-space: nowrap; }
.status span { width: 47px; height: 29px; line-height: 28px; border-radius: 4px; background: #5cb85c; color: #fff; font-size: 18px; font-weight: bold; text-align: center; }
.info { display: flex; align-items: center; gap: 6px; height: 24px; padding: 0 0 2px 23px; background: #eee; color: #444; white-space: nowrap; }
.info b { height: 18px; padding: 0 9px; border-radius: 9px; background: #777; color: #fff; font-size: 12px; line-height: 18px; }
.viewer { display: flex; height: 616px; background: #fff; }
.drawing { flex: 1 0 auto; }
.vthin { flex: none; width: 7px; padding: 127px 0 0 2px; background: #f1f1f1; margin-left: auto; }
.vthin div { height: 293px; background: #c1c1c1; }
.zone { font: 300 47px Lato, sans-serif; fill: #000; stroke: #000; stroke-width: 1; }
.boxes rect { fill: #d6ebd6; stroke: #cbe6cb; }
.boxes .sel { stroke: #e0200c; stroke-width: 2; }
.ln { fill: none; stroke: #222; stroke-width: 1; }
.hv { stroke: #000; stroke-width: 1.300; }
.dim { font: 23px Lato, sans-serif; fill: #1a1a1a; }
.balloons { fill: #1100fa; text-anchor: middle; font: bold 13px "Liberation Sans", sans-serif; }
.balloons text { fill: #fff; }
.balloons .k1 { font-size: 11px; }
.balloons .k2 { font-size: 8px; }
.hscroll { display: flex; height: 17px; background: #f1f1f1; }
.hscroll .track { flex: 1; padding: 2px 0; }
.hscroll .thumb { height: 13px; background: #c1c1c1; }
.wide { padding-right: 7px; }
.wide .thumb { width: 83.5%; }
.narrow { height: 18px; }
.narrow .thumb { width: 211px; }
.hsplit { height: 7px; background: linear-gradient(#ddd 45%, #c8c8c8 50%, #ddd 70%); }
.grid { overflow: hidden; }
table { table-layout: fixed; width: 1354px; border-collapse: collapse; font: 12px "DejaVu Sans", sans-serif; }
.c-num { width: 49px; } .c-char { width: 108px; } .c-val { width: 63px; }
th, td { border: 1px solid #ccc; padding: 0 4px; overflow: hidden; white-space: nowrap; }
th { height: 25px; padding: 0; background: #eee; font: 16px "Liberation Sans", sans-serif; color: #333; }
td { height: 22px; background: #008000; color: #fff; font-family: "DejaVu Sans Condensed", "DejaVu Sans", sans-serif; font-weight: bold; }
td:nth-child(-n+2) { background: #5cb85c !important; color: #2d5a2d !important; font-family: "DejaVu Sans", sans-serif; font-weight: 400; }
.current td, td:nth-child(9) { background: #a4d53c; color: #158a05; font-family: "DejaVu Sans", sans-serif; font-weight: 400; }
td.cell-on { outline: 2px solid #4a8df0; outline-offset: -1px; }
td.blank { background: #fff; }
```
